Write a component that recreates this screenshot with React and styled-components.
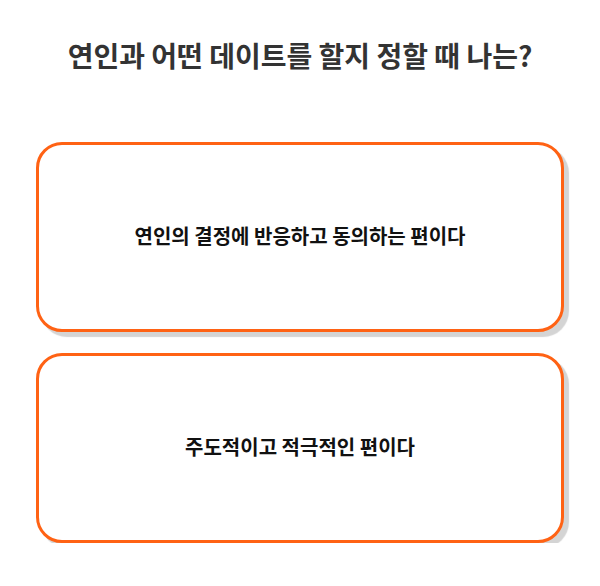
import React from 'react';
import styled, { createGlobalStyle } from 'styled-components';

const GlobalStyle = createGlobalStyle`
body{
    margin:0;
    background:#fff;
    font-family:"Noto Sans CJK KR", "Noto Sans", sans-serif;
}
`

const choices = [
    '연인의 결정에 반응하고 동의하는 편이다',
    '주도적이고 적극적인 편이다',
];

function App() {
    return(
        <>
            <GlobalStyle/>
            <Page>
                <Question>연인과 어떤 데이트를 할지 정할 때 나는?</Question>
                <Choices>
                    {choices.map((text) => (
                        <Choice key={text}>{text}</Choice>
                    ))}
                </Choices>
            </Page>
        </>
    )
}

export default App;


const Page=styled.div`
display:flex;
flex-direction:column;
align-items:center;
padding:30px 36px 0;
`

const Question=styled.h1`
margin:0;
font-size:28px;
font-weight:700;
color:#333;
line-height:50px;
text-align:center;
`

const Choices=styled.div`
display:flex;
flex-direction:column;
gap:21px;
width:100%;
margin-top:62px;
`

const Choice=styled.button`
height:190px;
width:100%;
box-sizing:border-box;
display:flex;
align-items:center;
justify-content:center;
padding:0 0 4px;
background:#fff;
border:3px solid #ff6214;
border-radius:26px;
box-shadow:5px 5px 1px #d4d4d4;
font-family:inherit;
font-size:20px;
font-weight:700;
color:#111;
cursor:pointer;
`
